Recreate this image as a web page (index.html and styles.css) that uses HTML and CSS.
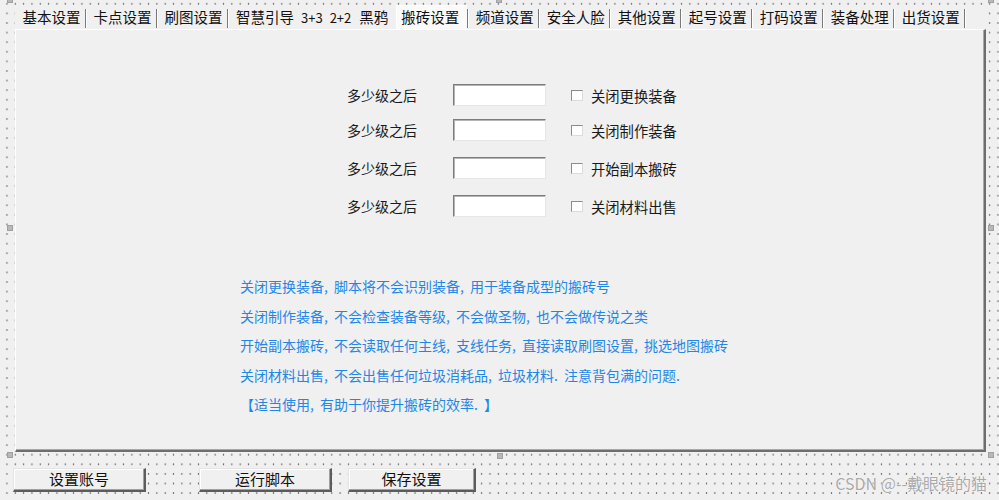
FILE: index.html
```html
<!DOCTYPE html>
<html lang="zh-CN">
<head>
<meta charset="utf-8">
<title>搬砖设置</title>
<link rel="stylesheet" href="styles.css">
</head>
<body>
<div class="screen">
  <div class="tabctl">
    <div class="tabs">
      <div class="tab first">基本设置</div><i class="sep"></i>
      <div class="tab">卡点设置</div><i class="sep"></i>
      <div class="tab">刷图设置</div><i class="sep"></i>
      <div class="tab wide">智慧引导<span class="num">3+3</span><span class="num">2+2</span><span class="tail">黑鸦</span></div>
      <div class="tab active">搬砖设置</div><i class="sep"></i>
      <div class="tab">频道设置</div><i class="sep"></i>
      <div class="tab">安全人脸</div><i class="sep"></i>
      <div class="tab">其他设置</div><i class="sep"></i>
      <div class="tab">起号设置</div><i class="sep"></i>
      <div class="tab">打码设置</div><i class="sep"></i>
      <div class="tab">装备处理</div><i class="sep"></i>
      <div class="tab">出货设置</div><i class="sep"></i>
    </div>
    <div class="page">
      <div class="form">
        <div class="row">
          <span class="lbl">多少级之后</span>
          <span class="input"></span>
          <span class="chk"></span><span class="chklbl">关闭更换装备</span>
        </div>
        <div class="row r2">
          <span class="lbl">多少级之后</span>
          <span class="input"></span>
          <span class="chk"></span><span class="chklbl">关闭制作装备</span>
        </div>
        <div class="row r3">
          <span class="lbl">多少级之后</span>
          <span class="input"></span>
          <span class="chk"></span><span class="chklbl">开始副本搬砖</span>
        </div>
        <div class="row r4">
          <span class="lbl">多少级之后</span>
          <span class="input"></span>
          <span class="chk"></span><span class="chklbl">关闭材料出售</span>
        </div>
      </div>
      <div class="notes">
        <p>关闭更换装备, 脚本将不会识别装备, 用于装备成型的搬砖号</p>
        <p>关闭制作装备, 不会检查装备等级, 不会做圣物, 也不会做传说之类</p>
        <p>开始副本搬砖, 不会读取任何主线, 支线任务, 直接读取刷图设置, 挑选地图搬砖</p>
        <p>关闭材料出售, 不会出售任何垃圾消耗品, 垃圾材料. 注意背包满的问题.</p>
        <p>【适当使用, 有助于你提升搬砖的效率. 】</p>
      </div>
    </div>
  </div>
  <div class="btns">
    <div class="btn b1">设置账号</div>
    <div class="btn b2">运行脚本</div>
    <div class="btn b3">保存设置</div>
  </div>

  <i class="handle h-tl"></i><i class="handle h-tm"></i><i class="handle h-tr"></i>
  <i class="handle h-ml"></i><i class="handle h-mr"></i>
  <i class="handle h-bl"></i><i class="handle h-bm"></i><i class="handle h-br"></i>
  <div class="watermark">CSDN @--戴眼镜的猫</div>
</div>
</body>
</html>
```

FILE: styles.css
```css
html, body {
  margin: 0;
  padding: 0;
}
body {
  font-family: "Noto Sans CJK SC", "Noto Sans", sans-serif;
  color: #111;
  background: #f0f0f0;
}
.screen {
  position: relative;
  width: 999px;
  height: 500px;
  overflow: hidden;
  background-color: #f0f0f0;
  background-image: radial-gradient(circle, #707070 0, #707070 0.6px, rgba(112,112,112,0) 1.1px);
  background-size: 8.33px 9.6px;
  background-position: 2.8px -1px;
  padding-top: 5px;
  box-sizing: border-box;
}

/* tab control */
.tabctl {
  margin-left: 15px;
  width: 971px;
  height: 447px;
  background: #f0f0f0;
  display: flex;
  flex-direction: column;
}
.tabs {
  height: 24px;
  display: flex;
  align-items: center;
  font-size: 14.5px;
  white-space: nowrap;
}
.tab {
  height: 24px;
  line-height: 24px;
  padding: 0 4.5px 0 6.5px;
  flex: none;
  color: #111;
}
.tab.first { padding-left: 7.5px; }
.tab.wide { padding-left: 7px; padding-right: 8px; }
.tab .num {
  font-size: 13px;
  margin-left: 7px;
}
.tab .tail { margin-left: 8px; }
.tab.active {
  background: #fafafa;
  padding: 0 8px 0 5px;
  box-shadow: inset 1px 1px 0 #ffffff;
}
.sep {
  flex: none;
  width: 0;
  height: 19px;
  border-left: 1px solid #7a7a7a;
  border-right: 1px solid #ffffff;
  margin-top: 2px;
}

.page {
  flex: 1;
  box-sizing: border-box;
  border-top: 1px solid #ffffff;
  border-left: 1px solid #ffffff;
  border-right: 2px solid #6e6e6e;
  border-bottom: 2px solid #6e6e6e;
  box-shadow: inset -1px -1px 0 #a8a8a8;
  padding: 54px 0 0 331px;
}

/* form */
.row {
  display: flex;
  align-items: center;
  height: 22px;
  font-size: 14px;
}
.r2 { margin-top: 13px; }
.r3 { margin-top: 16px; }
.r4 { margin-top: 16px; }
.lbl {
  width: 106px;
  flex: none;
  color: #1a1a1a;
}
.input {
  flex: none;
  box-sizing: border-box;
  width: 93px;
  height: 22px;
  background: #ffffff;
  border: 1px solid;
  border-color: #7c7c7c #e6e6e6 #e6e6e6 #7c7c7c;
  box-shadow: inset 1px 1px 0 #b4b4b4;
}
.chk {
  flex: none;
  box-sizing: border-box;
  width: 12px;
  height: 11px;
  margin-left: 25px;
  margin-right: 8px;
  background: #ffffff;
  border: 1px solid;
  border-color: #8c8c8c #dcdcdc #dcdcdc #8c8c8c;
}
.chklbl {
  font-size: 14.3px;
  color: #1a1a1a;
}

/* notes */
.notes {
  margin: 55px 0 0 -107px;
  font-size: 14px;
  line-height: 29.5px;
  color: #1f87e6;
  word-spacing: 3px;
  white-space: nowrap;
}
.notes p { margin: 0; }

/* buttons */
.btns {
  display: flex;
  margin-top: 16px;
}
.btn {
  flex: none;
  box-sizing: border-box;
  height: 24px;
  line-height: 20px;
  text-align: center;
  font-size: 15px;
  color: #111;
  background: #f0f0f0;
  border-top: 1px solid #e4e4e4;
  border-left: 1px solid #e4e4e4;
  border-right: 2px solid #5c5c5c;
  border-bottom: 2px solid #5c5c5c;
  box-shadow: inset -1px -1px 0 #a0a0a0, inset 1px 1px 0 #ffffff;
}
.b1 { margin-left: 13px; width: 133px; }
.b2 { margin-left: 53px; width: 133px; }
.b3 { margin-left: 16px; width: 128px; }

/* designer selection handles */
.handle {
  position: absolute;
  width: 6px;
  height: 6px;
  box-sizing: border-box;
  background: #b8b8b8;
  border: 1px solid #a0a0a0;
}
.h-tl { left: 7px; top: -3px; }
.h-tm { left: 496px; top: -3px; }
.h-tr { left: 988px; top: -3px; }
.h-ml { left: 7px; top: 225px; }
.h-mr { left: 988px; top: 225px; }
.h-bl { left: 7px; top: 452px; }
.h-bm { left: 497px; top: 453px; }
.h-br { left: 988px; top: 452px; }

.watermark {
  position: absolute;
  right: 12px;
  top: 472px;
  font-size: 16px;
  line-height: 22px;
  color: #a9a9a9;
  text-shadow: 0 0 1px #ffffff, 0 0 1px #ffffff;
  white-space: nowrap;
}
```
